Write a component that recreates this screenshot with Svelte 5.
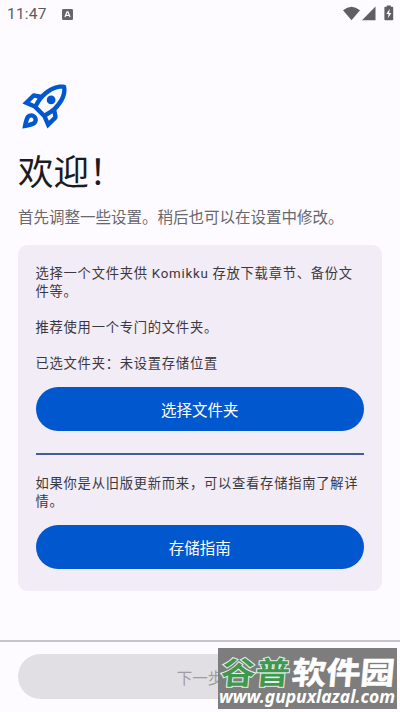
<script lang="ts">
  let clock = '11:47';
  let storageLocation = '未设置存储位置';
  let canContinue = false;
</script>

<div class="screen">
  <header class="status-bar">
    <span class="clock">{clock}</span>
    <svg class="app-badge" viewBox="0 0 12 12">
      <rect width="12" height="12" rx="1.5" fill="#66656a" />
      <path d="M3.2 8.7 5.5 3.2h1L8.8 8.7M4.3 7h3.4" fill="none" stroke="#fff" stroke-width="1.3" />
    </svg>
    <svg class="system-icons" viewBox="0 0 52 18">
      <path d="M0 5.2Q8.5-1.8 17 5.2L8.5 15.2Z" />
      <path d="M32.5 1.5V15.2H19Z" />
      <path d="M43.8 1.8V.5h4v1.3h1.6q.8 0 .8.8v11.8q0 .8-.8.8h-7.2q-.8 0-.8-.8V2.6q0-.8.8-.8Z" />
      <path d="M46.8 3.7 43.3 9h2.3l-.8 4.3 3.6-5.4h-2.3Z" fill="#fff" />
    </svg>
  </header>

  <main>
    <svg class="rocket" viewBox="0 0 24 24">
      <path d="M6 15c-.83 0-1.58.34-2.12.88C2.7 17.06 2 22 2 22s4.94-.7 6.12-1.88C8.66 19.58 9 18.83 9 18c0-1.66-1.34-3-3-3zm.71 3.71c-.28.28-2.17.76-2.17.76s.47-1.88.76-2.17c.17-.19.42-.3.7-.3.55 0 1 .45 1 1 0 .28-.11.53-.29.71zM17.42 13.65c6.36-6.36 4.24-11.31 4.24-11.31s-4.95-2.12-11.31 4.24l-2.49-.5c-.65-.13-1.33.08-1.81.55L2 10.69l5 2.14L11.17 17l2.14 5 4.05-4.05c.47-.47.68-1.15.55-1.81l-.49-2.49zM7.41 10.83l-1.91-.82 1.97-1.97 1.44.29c-.57.83-1.08 1.7-1.5 2.5zm6.58 7.67l-.82-1.91c.8-.42 1.67-.93 2.49-1.5l.29 1.44-1.96 1.97zM16 12.24c-1.32 1.32-3.38 2.4-4.04 2.73l-2.93-2.93c.32-.65 1.4-2.71 2.73-4.04 4.68-4.68 8.23-3.99 8.23-3.99s.69 3.55-3.99 8.23zM15 11c1.1 0 2-.9 2-2s-.9-2-2-2-2 .9-2 2 .9 2 2 2z" />
    </svg>
    <h1>欢迎！</h1>
    <p class="subtitle">首先调整一些设置。稍后也可以在设置中修改。</p>

    <section class="card">
      <p>选择一个文件夹供 Komikku 存放下载章节、备份文件等。</p>
      <p>推荐使用一个专门的文件夹。</p>
      <p>已选文件夹：{storageLocation}</p>
      <button class="primary">选择文件夹</button>
      <hr />
      <p class="guide">如果你是从旧版更新而来，可以查看存储指南了解详情。</p>
      <button class="primary">存储指南</button>
    </section>
  </main>

  <footer>
    <button class="next" disabled={!canContinue}>下一步</button>
  </footer>

  <!-- Site stamp, sits over the bottom right corner -->
  <svg class="stamp" viewBox="0 0 179 61">
    <rect width="179" height="61" fill="#7d7d7d" />
    <g class="stamp-name" transform="skewX(-5)">
      <text class="green" x="5" y="35.5" textLength="69" lengthAdjust="spacingAndGlyphs">谷普</text>
      <text class="white" x="76" y="35.5" textLength="103" lengthAdjust="spacingAndGlyphs">软件园</text>
    </g>
    <text class="stamp-url" x="1" y="55" textLength="176" lengthAdjust="spacingAndGlyphs">www.gupuxlazal.com</text>
  </svg>
</div>

<style>
  :global(body) {
    margin: 0;
    background: #fdfbff;
  }

  .screen {
    position: relative;
    display: flex;
    flex-direction: column;
    width: 400px;
    height: 712px;
    overflow: hidden;
    background: #fdfbff;
    color: #1b1b1f;
    font-family: 'Noto Sans CJK SC', sans-serif;
  }

  .status-bar {
    display: flex;
    align-items: center;
    height: 28px;
    padding: 0 5px 0 7px;
    box-sizing: border-box;
  }

  .clock {
    font-family: Roboto, sans-serif;
    font-size: 15.5px;
    letter-spacing: 0.2px;
    color: #5c5b60;
  }

  .app-badge {
    width: 11px;
    height: 11px;
    margin-left: 15px;
  }

  .system-icons {
    width: 52px;
    height: 18px;
    margin-left: auto;
    margin-top: 0;
    fill: #5f5e62;
  }

  main {
    flex: 1;
    padding: 52px 18px 0;
  }

  .rocket {
    display: block;
    width: 53px;
    height: 53px;
    fill: #0057ce;
  }

  h1 {
    margin: 12px 0 0;
    font-size: 35.5px;
    line-height: 50px;
    font-weight: 400;
  }

  .subtitle {
    margin: 9px 0 0;
    font-size: 15.5px;
    line-height: 24px;
    color: #68676c;
  }

  .card {
    display: flex;
    flex-direction: column;
    height: 346px;
    margin-top: 17px;
    padding: 20px 18px 0 17.5px;
    box-sizing: border-box;
    border-radius: 9px;
    background: #f2ecf6;
  }

  .card p {
    margin: 0 0 18px;
    font-family: Roboto, 'Noto Sans CJK SC', sans-serif;
    font-size: 13.3px;
    line-height: 18px;
    letter-spacing: 0.74px;
    color: #3a383e;
  }

  .card p:nth-of-type(3),
  .card .guide {
    margin-bottom: 13.5px;
  }

  .primary {
    height: 44.5px;
    flex: none;
    padding: 0;
    border: none;
    border-radius: 23px;
    background: #0057ce;
    color: #fff;
    font: 400 15.5px 'Noto Sans CJK SC', sans-serif;
  }

  hr {
    width: 100%;
    height: 1.5px;
    margin: 22px 0 20.5px;
    border: none;
    background: #465d91;
  }

  footer {
    height: 72px;
    padding: 12px 18px 0;
    box-sizing: border-box;
    border-top: 2px solid #c6c4c9;
  }

  .next {
    display: block;
    width: 100%;
    height: 45px;
    padding: 0;
    border: none;
    border-radius: 23px;
    background: #e1dfe4;
    color: #9e9ca1;
    font: 400 15.5px 'Noto Sans CJK SC', sans-serif;
  }

  .stamp {
    position: absolute;
    left: 218px;
    top: 648px;
    width: 179px;
    height: 61px;
    overflow: visible;
  }

  .stamp-name {
    font-size: 31px;
    font-weight: 700;
  }

  .white {
    fill: #fff;
    stroke: #fff;
    stroke-width: 0.6px;
  }

  .green {
    fill: #3f9750;
    stroke: #e4efe6;
    stroke-width: 2px;
    paint-order: stroke;
  }

  .stamp-url {
    font-family: 'Noto Sans', 'Open Sans', sans-serif;
    font-size: 17.5px;
    font-weight: 700;
    font-style: italic;
    fill: #fff;
  }
</style>
